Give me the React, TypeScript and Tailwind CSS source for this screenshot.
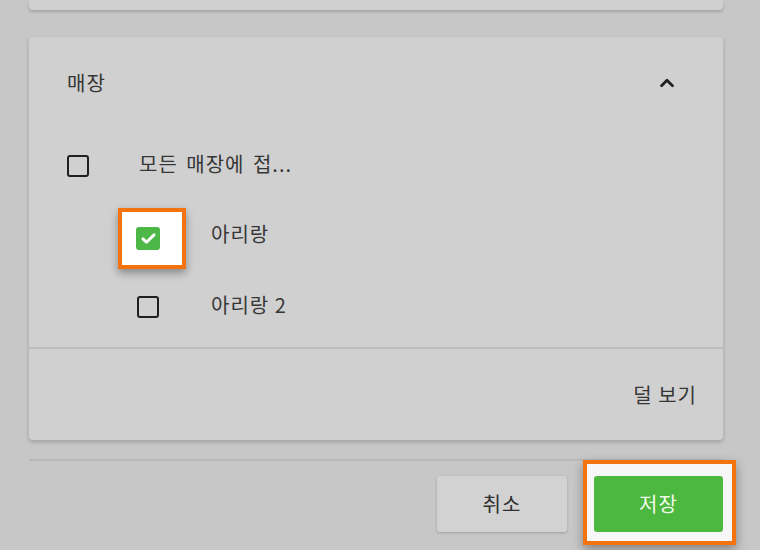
import { ChevronUp } from 'lucide-react';

const font = { fontFamily: '"Noto Sans CJK KR", "Noto Sans", sans-serif' };

function EmptyBox() {
  return <div className="w-[22px] h-[22px] rounded-[3px] border-[2.5px] border-[#1f1f1f]" />;
}

function CheckedBox() {
  return (
    <div className="w-[24px] h-[23px] rounded-[3px] bg-[#4db848] flex items-center justify-center">
      <svg viewBox="0 0 16 16" className="w-[17px] h-[17px]">
        <path d="M2.8 8.4l3.3 3.1 7.1-6.9" fill="none" stroke="#fff" strokeWidth="2.8" strokeLinecap="round" strokeLinejoin="round" />
      </svg>
    </div>
  );
}

export default function App() {
  return (
    <div className="w-[760px] h-[550px] bg-[#c7c7c7] overflow-hidden text-[#363636]" style={font}>
      <div className="ml-[29px] w-[694px]">
        <div className="h-[10px] bg-[#d0d0d0] rounded-b-[4px] shadow-[0_2px_3px_rgba(0,0,0,0.18)]" />

        <div className="mt-[27px] h-[403px] bg-[#d0d0d0] rounded-[4px] shadow-[0_2px_4px_rgba(0,0,0,0.2)] flex flex-col">
          <div className="h-[92px] flex items-center justify-between pl-[38px] pr-[45px] text-[20px] tracking-[1px]">
            <span>매장</span>
            <ChevronUp className="w-[22px] h-[22px] text-[#1f1f1f]" strokeWidth={3} />
          </div>

          <div className="flex flex-col pb-[5px] tracking-[1px]">
            <div className="h-[71px] flex items-center">
              <div className="ml-[38px] w-[72px] pt-[2px]">
                <EmptyBox />
              </div>
              <span className="text-[20px] -mt-[2px] [word-spacing:3px]">모든 매장에 접...</span>
            </div>
            <div className="h-[71px] flex items-center">
              <div className="ml-[89px] w-[93px] flex mt-[6px]">
                <div className="w-[68px] h-[61px] border-[4px] border-[#f5730f] bg-white flex items-center pl-[14px] shadow-[0_4px_8px_rgba(0,0,0,0.35)]">
                  <CheckedBox />
                </div>
              </div>
              <span className="text-[20px] -mt-[4px]">아리랑</span>
            </div>
            <div className="h-[71px] flex items-center">
              <div className="ml-[108px] w-[74px]">
                <EmptyBox />
              </div>
              <span className="text-[20px] -mt-[4px]">아리랑 2</span>
            </div>
          </div>

          <div className="border-t-[2px] border-[#bdbdbd] flex-1 flex items-center justify-end pr-[26px]">
            <span className="text-[20px] tracking-[1px]">덜 보기</span>
          </div>
        </div>

        <div className="mt-[19px] border-t-[2px] border-[#b8b8b8]" />

        <div className="mt-[15px] flex justify-end gap-[27px]">
          <button className="w-[130px] h-[56px] rounded-[3px] bg-[#d2d2d2] shadow-[0_1px_3px_rgba(0,0,0,0.2)] text-[20px] text-[#2e2e2e] tracking-[1px]">
            취소
          </button>
          <div className="relative">
            <div className="absolute left-[-11px] right-[-13px] top-[-16px] bottom-[-13px] border-[4px] border-[#f5730f] bg-[#f6f6f6] shadow-[0_4px_10px_rgba(0,0,0,0.35)]" />
            <button className="relative w-[129px] h-[56px] rounded-[3px] bg-[#4db83f] text-[20px] text-[#effbe9] tracking-[1px]">
              저장
            </button>
          </div>
        </div>
      </div>
    </div>
  );
}
